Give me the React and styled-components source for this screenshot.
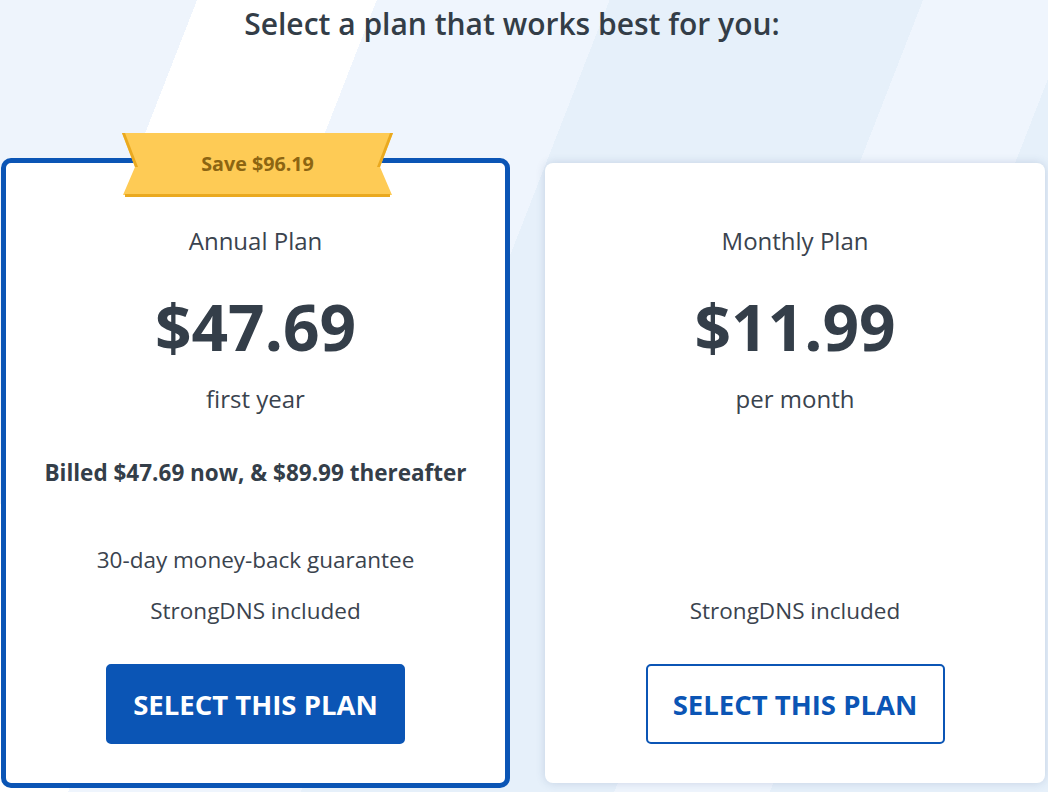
import React from "react";
import styled, { createGlobalStyle } from "styled-components";

const GlobalStyle = createGlobalStyle`
  html, body {
    margin: 0;
    padding: 0;
  }
  body {
    font-family: "Open Sans", "Noto Sans", sans-serif;
    color: #343e49;
  }
`;

const Page = styled.div`
  width: 100%;
  height: 792px;
  overflow: hidden;
  box-sizing: border-box;
  background: linear-gradient(
    111.3deg,
    #eef4fc 0 183.6px,
    #ffffff 183.6px 351px,
    #eff5fd 351px 568px,
    #e6f0fa 568px 860px,
    #eff5fd 860px 1005px,
    #e6f0fa 1005px
  );
`;

const Heading = styled.h1`
  margin: 0;
  padding: 4px 24px 0 0;
  font-size: 30px;
  line-height: 40px;
  font-weight: 600;
  text-align: center;
  color: #333d47;
`;

const Row = styled.div`
  display: flex;
  align-items: flex-start;
  gap: 35px;
  margin-top: 114px;
  padding-left: 1px;
`;

const Card = styled.div`
  position: relative;
  box-sizing: border-box;
  width: ${p => (p.$featured ? "509px" : "500px")};
  height: ${p => (p.$featured ? "630px" : "620px")};
  margin-top: ${p => (p.$featured ? "0" : "5px")};
  padding: 63px 0 39px;
  display: flex;
  flex-direction: column;
  align-items: center;
  background: #fff;
  border: ${p => (p.$featured ? "5px solid #0b55b5" : "none")};
  border-radius: ${p => (p.$featured ? "10px" : "8px")};
  box-shadow: ${p => (p.$featured ? "none" : "0 0 10px rgba(40, 70, 120, 0.18)")};
`;

const Ribbon = styled.div`
  position: absolute;
  top: -30px;
  left: calc(50% - 133.5px);
  width: 271px;
  height: 64px;
  display: flex;
  align-items: center;
  justify-content: center;
  padding-bottom: 3px;
  box-sizing: border-box;
  font-size: 19.7px;
  font-weight: 700;
  color: #8c6512;
  svg {
    position: absolute;
    inset: 0;
  }
  span {
    position: relative;
  }
`;

const PlanName = styled.div`
  font-size: 24px;
  line-height: 30px;
  color: #3a434e;
`;

const Price = styled.div`
  margin-top: 31px;
  font-size: 64px;
  line-height: 80px;
  font-weight: 700;
  color: #343e49;
`;

const Period = styled.div`
  margin-top: 17px;
  font-size: 24px;
  line-height: 30px;
  color: #3a434e;
`;

const Note = styled.div`
  flex: 1;
  padding-top: 44px;
  font-size: 22.5px;
  line-height: 30px;
  font-weight: 700;
  color: #343e49;
`;

const Features = styled.ul`
  margin: 0 0 38px;
  padding: 0;
  list-style: none;
  display: flex;
  flex-direction: column;
  align-items: center;
  gap: 21px;
`;

const Feature = styled.li`
  font-size: 22.5px;
  line-height: 30px;
  color: #3a434e;
`;

const Button = styled.button`
  width: 299px;
  height: 80px;
  box-sizing: border-box;
  border-radius: 5px;
  border: 2px solid #0b55b5;
  background: ${p => (p.$primary ? "#0b55b5" : "#fff")};
  color: ${p => (p.$primary ? "#fff" : "#0b55b5")};
  font-family: inherit;
  font-size: 27.5px;
  font-weight: 700;
  text-transform: uppercase;
  cursor: pointer;
`;

const RibbonShape = () => (
  <svg width="271" height="64" viewBox="0 0 271 64">
    <polygon points="0,0 271,0 258,34 270,62 1,62 13,34" fill="#fecb55" />
    <polygon points="0,0 3,0 16,34 13,34" fill="#eaa91f" />
    <polygon points="268,0 271,0 258,34 255,34" fill="#eaa91f" />
    <rect x="3" y="61" width="265" height="3" fill="#eaa91f" />
  </svg>
);

const plans = [
  {
    name: "Annual Plan",
    price: "$47.69",
    period: "first year",
    note: "Billed $47.69 now, & $89.99 thereafter",
    features: ["30-day money-back guarantee", "StrongDNS included"],
    save: "Save $96.19",
    featured: true,
  },
  {
    name: "Monthly Plan",
    price: "$11.99",
    period: "per month",
    features: ["StrongDNS included"],
  },
];

export default function App() {
  return (
    <Page>
      <GlobalStyle />
      <Heading>Select a plan that works best for you:</Heading>
      <Row>
        {plans.map(plan => (
          <Card key={plan.name} $featured={plan.featured}>
            {plan.save ? (
              <Ribbon>
                <RibbonShape />
                <span>{plan.save}</span>
              </Ribbon>
            ) : null}
            <PlanName>{plan.name}</PlanName>
            <Price>{plan.price}</Price>
            <Period>{plan.period}</Period>
            <Note>{plan.note}</Note>
            <Features>
              {plan.features.map(f => (
                <Feature key={f}>{f}</Feature>
              ))}
            </Features>
            <Button $primary={plan.featured}>Select this plan</Button>
          </Card>
        ))}
      </Row>
    </Page>
  );
}
